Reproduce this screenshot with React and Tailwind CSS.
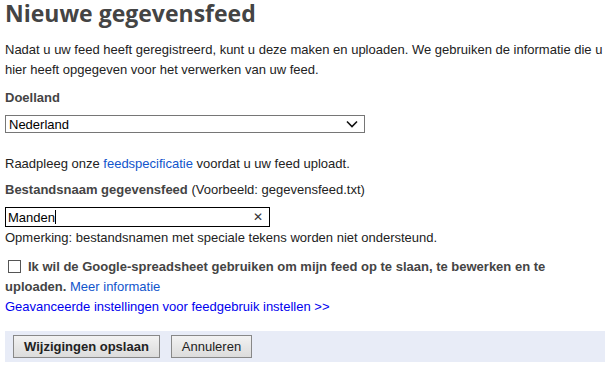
export default function App() {
  return (
    <div className="w-[616px] h-[369px] bg-white px-[5px] text-[13px] text-[#222] font-['Liberation_Sans',Arial,sans-serif] overflow-hidden">
      <h1 className="text-[23px] leading-[30px] -mt-[2px] font-bold text-[#444] font-['Open_Sans','Segoe_UI',sans-serif]">
        Nieuwe gegevensfeed
      </h1>
      <p className="mt-[12px] leading-[20px] pr-[4px]">
        Nadat u uw feed heeft geregistreerd, kunt u deze maken en uploaden. We gebruiken de informatie die u hier heeft opgegeven voor het verwerken van uw feed.
      </p>
      <div className="mt-[8px] font-bold text-[#444] leading-[20px]">Doelland</div>
      <div className="mt-[7px] w-[360px] h-[18px] border border-[#767676] flex items-center justify-between pl-[3px] pr-[6px] text-black">
        <span className="leading-none">Nederland</span>
        <svg width="12" height="8" viewBox="0 0 12 8">
          <path d="M1 1.5 L6 6.5 L11 1.5" fill="none" stroke="#111" strokeWidth="1.6" />
        </svg>
      </div>
      <p className="mt-[21px] leading-[20px]">
        Raadpleeg onze <span className="text-[#1155cc]">feedspecificatie</span> voordat u uw feed uploadt.
      </p>
      <p className="mt-[6px] leading-[20px]">
        <span className="font-bold text-[#444]">Bestandsnaam gegevensfeed</span> (Voorbeeld: gegevensfeed.txt)
      </p>
      <div className="mt-[7px] w-[265px] h-[20px] border border-black flex items-center justify-between pl-[2px] pr-[6px] text-black">
        <span className="leading-none flex items-center">
          Manden<span className="inline-block w-px h-[14px] bg-black" />
        </span>
        <span className="text-[12px] leading-none text-[#333]">✕</span>
      </div>
      <p className="leading-[20px] mt-[1px]">Opmerking: bestandsnamen met speciale tekens worden niet ondersteund.</p>
      <div className="mt-[9px] w-[560px] leading-[20px] font-bold text-[#444]">
        <span className="inline-block align-[-2px] w-[13px] h-[13px] border border-[#555] bg-white ml-[3px] mr-[7px]" />
        Ik wil de Google-spreadsheet gebruiken om mijn feed op te slaan, te bewerken en te uploaden.{' '}
        <span className="font-normal text-[#1155cc]">Meer informatie</span>
      </div>
      <div className="leading-[20px] text-[#0000ee]">Geavanceerde instellingen voor feedgebruik instellen &gt;&gt;</div>
      <div className="mt-[14px] w-[600px] h-[31px] bg-[#e8ecf7] flex items-center gap-[11px] pl-[8px]">
        <button className="h-[23px] px-[10px] border border-[#888] bg-gradient-to-b from-[#f2f2f2] to-[#dcdcdc] font-bold text-[#222] text-[13px] leading-none">
          Wijzigingen opslaan
        </button>
        <button className="h-[23px] px-[10px] border border-[#888] bg-gradient-to-b from-[#f2f2f2] to-[#dcdcdc] text-[#222] text-[13px] leading-none">
          Annuleren
        </button>
      </div>
    </div>
  );
}
